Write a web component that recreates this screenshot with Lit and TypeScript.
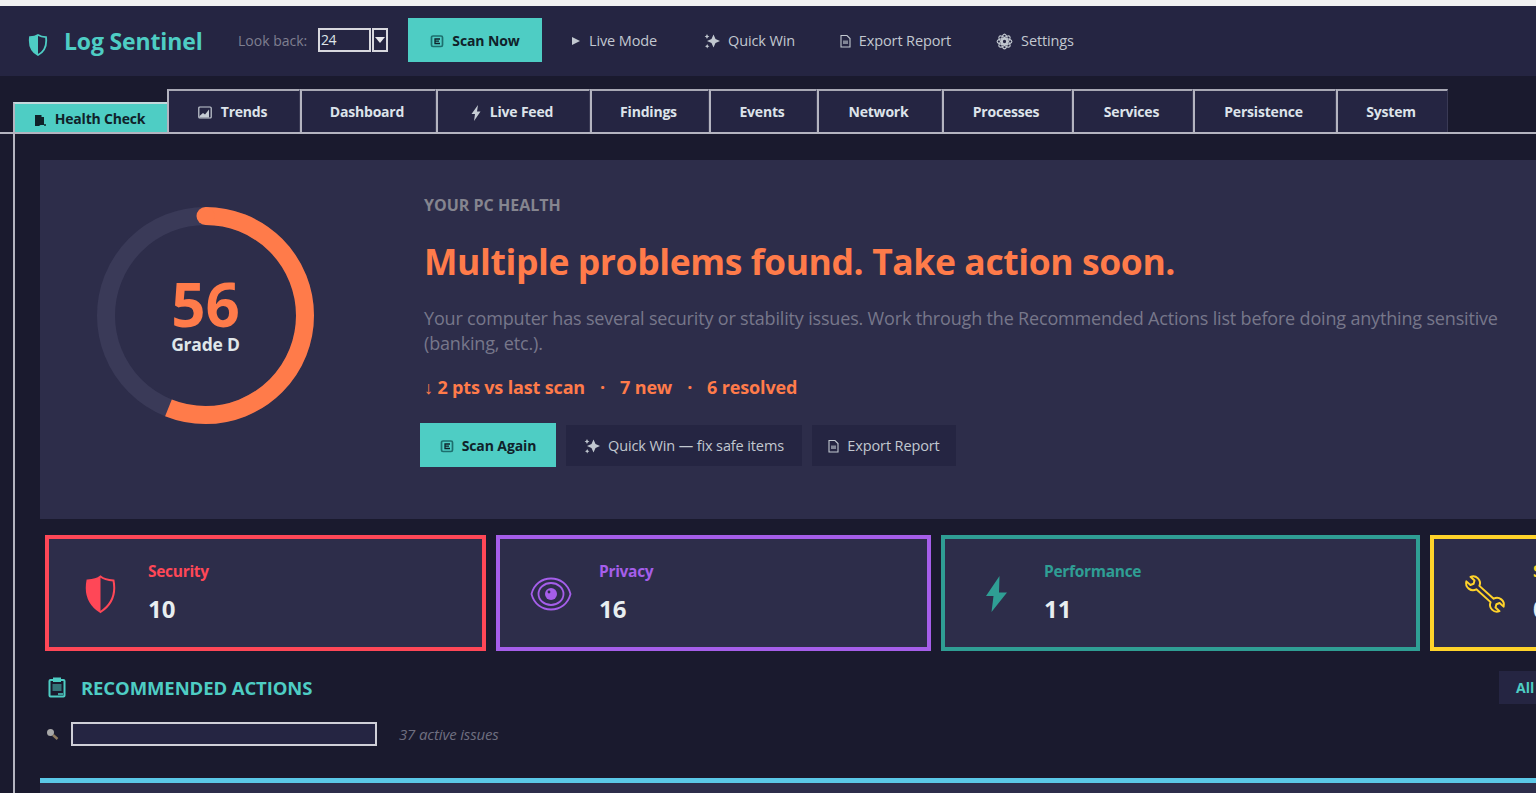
import { LitElement, css, html, svg } from 'lit';
import { customElement } from 'lit/decorators.js';

const icon = (w: number, h: number, vb: string, body: unknown) =>
  html`<svg class="ic" width=${w} height=${h} viewBox=${vb}>${body}</svg>`;

const scanIcon = icon(14, 14, '0 0 14 14', svg`
  <rect x="1.500" y="2" width="11" height="10.500" rx="1.500" fill="none" stroke="currentColor" stroke-width="1.700"/>
  <path d="M10 5H5v4.500h5M5 7.200h4" stroke="#10222a" stroke-width="1.300" fill="none"/>`);
const playIcon = icon(10, 10, '0 0 10 10', svg`<path d="M1 1l8 4-8 4z" fill="currentColor"/>`);
const sparkIcon = icon(16, 16, '0 0 16 16', svg`
  <path d="M9.500 1.500L11.500 6l4.500 2-4.500 2-2 4.500-2-4.500-4.500-2 4.500-2z" fill="currentColor"/>
  <path d="M3 1l.8 1.700 1.600.8-1.600.8L3 6l-.8-1.700L.6 3.500l1.600-.8zM3.200 11l.7 1.500 1.500.7-1.500.7-.7 1.600-.7-1.600-1.500-.7 1.500-.7z" fill="currentColor"/>`);
const docIcon = icon(11, 14, '0 0 11 14', svg`
  <path d="M1 1.500h6l3 3v8.500H1z" fill="none" stroke="currentColor" stroke-width="1.100"/>
  <path d="M3 6.500h5v3.500H3z" fill="currentColor" opacity=".6"/>`);
const gearIcon = icon(17, 17, '0 0 17 17', svg`
  <g fill="none" stroke="currentColor" stroke-width="1.100">
    <circle cx="8.500" cy="8.500" r="2.200"/>
    ${[0, 45, 90, 135].map(
      (a) => svg`<ellipse cx="8.500" cy="8.500" rx="3" ry="7.400" transform="rotate(${a} 8.500 8.500)"/>`
    )}
  </g>`);
const boltIcon = icon(10, 16, '0 0 10 16', svg`<path d="M7 0L.5 9H4l-1 7 6.500-9.500H6z" fill="currentColor"/>`);
const chartIcon = icon(14, 13, '0 0 14 13', svg`
  <rect x=".8" y="1" width="12.400" height="11" rx="1" fill="none" stroke="currentColor" stroke-width="1.200"/>
  <path d="M1.500 10l3.500-3 2 1.500 4-5v8H1.500z" fill="currentColor"/>`);
const clipIcon = icon(12, 13, '0 0 12 13', svg`
  <path d="M1 2h6.500v2H10v8H6.500L5 13H1z" fill="currentColor"/>
  <circle cx="11" cy="12" r="1" fill="currentColor"/>`);

@customElement('app-root')
export class AppRoot extends LitElement {
  static styles = css`
    :host {
      display: block;
      width: 1536px;
      height: 793px;
      overflow: hidden;
      background: #1a1a2e;
      font-family: 'Open Sans', 'Noto Sans', 'Liberation Sans', sans-serif;
      color: #dfe6e9;
    }
    .strip {
      height: 6px;
      background: #f1f1f1;
    }
    .toolbar {
      display: flex;
      align-items: center;
      height: 70px;
      padding-left: 28px;
      background: #252542;
    }
    .toolbar button,
    .select {
      margin-bottom: 2px;
    }
    .logo {
      display: flex;
      align-items: center;
      gap: 16px;
      width: 210px;
      color: #4ecdc4;
      font-size: 23px;
      font-weight: 700;
      letter-spacing: -0.15px;
    }
    .logo svg {
      margin-top: 7px;
    }
    .lookback {
      color: #7f7f90;
      font-size: 14px;
      width: 80px;
      margin-bottom: 2px;
    }
    .select {
      display: flex;
      gap: 1px;
      margin-right: 20px;
    }
    .field {
      width: 48px;
      height: 20px;
      border: 2px solid #d8d8de;
      font-size: 14px;
      line-height: 20px;
      padding-left: 1px;
      color: #dfe6e9;
      letter-spacing: -0.5px;
    }
    .arrow {
      display: flex;
      align-items: center;
      justify-content: center;
      width: 12px;
      height: 20px;
      border: 2px solid #d8d8de;
    }
    .arrow::before {
      content: '';
      border-left: 5px solid transparent;
      border-right: 5px solid transparent;
      border-top: 6px solid #e8e8ec;
    }
    button {
      display: flex;
      align-items: center;
      justify-content: center;
      gap: 8px;
      padding: 0;
      border: 0;
      background: none;
      color: #c2c8d0;
      font: inherit;
      font-size: 14.500px;
      letter-spacing: -0.12px;
      white-space: nowrap;
    }
    .ic {
      flex: none;
      margin-top: 2px;
    }
    .primary {
      background: #4ecdc4;
      color: #10222a;
      font-weight: 700;
      height: 44px;
      font-size: 14px;
      letter-spacing: -0.1px;
    }
    .primary .ic {
      color: #1d6f6e;
    }
    .tool {
      height: 44px;
    }
    .scan-now {
      width: 134px;
    }
    .live {
      width: 132px;
      margin-left: 6px;
    }
    .quick {
      width: 137px;
      margin-left: 1px;
    }
    .export {
      width: 153px;
      margin-left: 1px;
    }
    .settings {
      width: 122px;
      margin-left: 2px;
    }
    .tabs {
      display: grid;
      grid-template-columns: 154px 133px 136px 154px 119px 108px 125px 130px 121px 143px 112px;
      align-items: end;
      height: 43px;
      margin-top: 13px;
      padding-left: 13px;
      border-bottom: 2px solid #b4b4c0;
    }
    .tab {
      display: flex;
      align-items: center;
      justify-content: center;
      gap: 9px;
      box-sizing: border-box;
      height: 43px;
      padding-right: 3px;
      background: #252542;
      border-top: 2px solid #a8a8b4;
      border-left: 2px solid #b4b4c0;
      border-right: 1px solid #3a3a55;
      font-size: 14px;
      font-weight: 700;
      letter-spacing: -0.2px;
      color: #dde3ea;
    }
    .tab .ic {
      color: #c6ccd4;
    }
    .tab.on {
      height: 30px;
      background: #4ecdc4;
      color: #10222a;
      border-top-color: #c4d8dc;
      border-right: 0;
    }
    .tab.on .ic {
      color: #10222a;
    }
    .panel {
      width: 1900px;
      margin-left: 13px;
      padding: 26px 0 0 25px;
      border-left: 2px solid #b4b4c0;
      height: 700px;
    }
    .hero {
      display: flex;
      height: 359px;
      box-sizing: border-box;
      padding: 47px 0 0 57px;
      background: #2d2d4a;
    }
    .ring {
      position: relative;
      flex: none;
      width: 217px;
      height: 217px;
    }
    .ring-text {
      position: absolute;
      inset: 0;
      display: flex;
      flex-direction: column;
      align-items: center;
      justify-content: center;
      padding-bottom: 3px;
    }
    .score {
      color: #ff7b4a;
      font-size: 60px;
      font-weight: 700;
      line-height: 60px;
    }
    .grade {
      font-size: 17.500px;
      font-weight: 700;
      line-height: 20px;
      letter-spacing: -0.2px;
    }
    .summary {
      margin-left: 110px;
      margin-top: -13px;
      width: 1090px;
    }
    .eyebrow {
      color: #85858f;
      font-size: 16px;
      font-weight: 700;
      line-height: 22px;
    }
    h1 {
      margin: 21px 0 0;
      color: #ff7b4a;
      font-size: 35.500px;
      font-weight: 700;
      line-height: 48px;
      letter-spacing: -0.4px;
    }
    .desc {
      margin: 21px 0 0;
      color: #77778a;
      font-size: 18px;
      line-height: 25px;
      letter-spacing: -0.17px;
    }
    .delta {
      display: flex;
      gap: 15px;
      margin-top: 19px;
      color: #ff7b4a;
      font-size: 18px;
      font-weight: 700;
      line-height: 24px;
      letter-spacing: -0.15px;
    }
    .actions {
      display: flex;
      align-items: center;
      gap: 10px;
      margin: 24px 0 0 -4px;
    }
    .scan-again {
      width: 136px;
    }
    .ghost {
      height: 41px;
      background: #252542;
    }
    .quick-fix {
      width: 236px;
    }
    .export-2 {
      width: 144px;
    }
    .cards {
      display: grid;
      grid-template-columns: 441px 435px 479px 400px;
      gap: 10px;
      margin: 16px 0 0 5px;
    }
    .card {
      display: flex;
      align-items: center;
      box-sizing: border-box;
      height: 116px;
      padding: 0 0 2px 21px;
      background: #2d2d4a;
      border: 4px solid var(--accent);
      color: var(--accent);
    }
    .card-icon {
      display: flex;
      justify-content: center;
      flex: none;
      width: 60px;
      margin: 4px 18px 0 0;
    }
    .card-label {
      font-size: 15.500px;
      font-weight: 700;
      line-height: 22px;
      letter-spacing: -0.3px;
    }
    .card-count {
      margin-top: 12px;
      color: #e8eef0;
      font-size: 24px;
      font-weight: 700;
      line-height: 30px;
    }
    .heading {
      display: flex;
      align-items: center;
      height: 33px;
      margin-top: 20px;
    }
    .heading svg {
      margin-left: 8px;
    }
    h2 {
      width: 1418px;
      margin: 0 0 0 15px;
      color: #4ecdc4;
      font-size: 18.500px;
      font-weight: 700;
      letter-spacing: -0.1px;
    }
    .all {
      display: flex;
      align-items: center;
      width: 80px;
      height: 33px;
      padding-left: 17px;
      background: #252542;
      color: #4ecdc4;
      font-size: 14px;
      font-weight: 700;
    }
    .search {
      display: flex;
      align-items: center;
      height: 24px;
      margin-top: 18px;
      margin-left: 5px;
    }
    .search-box {
      box-sizing: border-box;
      width: 306px;
      height: 24px;
      margin-left: 12px;
      background: #252542;
      border: 2px solid #d0d0d8;
    }
    .count {
      margin-left: 22px;
      color: #6f6f80;
      font-size: 15px;
      font-style: italic;
      letter-spacing: -0.15px;
    }
    .next {
      height: 40px;
      margin-top: 32px;
      background: #2d2d4a;
      border-top: 5px solid #5bc8e8;
    }
  `;

  private tabs: [string, unknown][] = [
    ['Trends', chartIcon],
    ['Dashboard', null],
    ['Live Feed', boltIcon],
    ['Findings', null],
    ['Events', null],
    ['Network', null],
    ['Processes', null],
    ['Services', null],
    ['Persistence', null],
    ['System', null],
  ];

  render() {
    return html`
      <div class="strip"></div>
      <header class="toolbar">
        <div class="logo">
          <svg width="20" height="22" viewBox="0 0 20 22">
            <path d="M10 1c2.500 1.500 5 2 8 2.200 1 7.800-1.500 14.300-8 17.800C3.500 17.500 1 11 2 3.200 5 3 7.500 2.500 10 1z" fill="none" stroke="currentColor" stroke-width="1.800"/>
            <path d="M10 1C7.500 2.500 5 3 2 3.200 1 11 3.500 17.500 10 21z" fill="currentColor"/>
          </svg>
          Log Sentinel
        </div>
        <div class="lookback">Look back:</div>
        <div class="select">
          <div class="field">24</div>
          <div class="arrow"></div>
        </div>
        <button class="primary scan-now">${scanIcon}Scan Now</button>
        <button class="tool live">${playIcon}Live Mode</button>
        <button class="tool quick">${sparkIcon}Quick Win</button>
        <button class="tool export">${docIcon}Export Report</button>
        <button class="tool settings">${gearIcon}Settings</button>
      </header>

      <nav class="tabs">
        <div class="tab on">${clipIcon}Health Check</div>
        ${this.tabs.map(([label, ic]) => html`<div class="tab">${ic}${label}</div>`)}
      </nav>

      <main class="panel">
        <section class="hero">
          <div class="ring">
            <svg width="217" height="217" viewBox="0 0 217 217">
              <circle cx="108.500" cy="108.500" r="99.500" fill="none" stroke="#3a3a58" stroke-width="18"/>
              <circle
                cx="108.500"
                cy="108.500"
                r="99.500"
                fill="none"
                stroke="#ff7b4a"
                stroke-width="18"
                stroke-dasharray="350 625.200"
                transform="rotate(-90 108.500 108.500)"
              />
              <circle cx="108.500" cy="9" r="9" fill="#ff7b4a"/>
            </svg>
            <div class="ring-text">
              <div class="score">56</div>
              <div class="grade">Grade D</div>
            </div>
          </div>
          <div class="summary">
            <div class="eyebrow">YOUR PC HEALTH</div>
            <h1>Multiple problems found. Take action soon.</h1>
            <p class="desc">
              Your computer has several security or stability issues. Work through the Recommended Actions list before
              doing anything sensitive (banking, etc.).
            </p>
            <div class="delta">
              <span>↓ 2 pts vs last scan</span><span>·</span><span>7 new</span><span>·</span><span>6 resolved</span>
            </div>
            <div class="actions">
              <button class="primary scan-again">${scanIcon}Scan Again</button>
              <button class="ghost quick-fix">${sparkIcon}Quick Win — fix safe items</button>
              <button class="ghost export-2">${docIcon}Export Report</button>
            </div>
          </div>
        </section>

        <section class="cards">
          <div class="card" style="--accent:#ff4757">
            <div class="card-icon">
              <svg width="33" height="39" viewBox="0 0 33 39">
                <path d="M16.500 1.500c3 2.500 7 3.500 13 4 2.500 13-1.500 24-13 31.500C5 29.500 1 18.500 3.500 5.500c6-.5 10-1.500 13-4z" fill="none" stroke="currentColor" stroke-width="2"/>
                <path d="M16.500 1.500c-3 2.500-7 3.500-13 4C1 18.500 5 29.500 16.500 37z" fill="currentColor"/>
              </svg>
            </div>
            <div><div class="card-label">Security</div><div class="card-count">10</div></div>
          </div>
          <div class="card" style="--accent:#a55eea">
            <div class="card-icon">
              <svg width="42" height="34" viewBox="0 0 42 34">
                <g fill="none" stroke="currentColor" stroke-width="1.800">
                  <path d="M1.500 17C4 7 12 1.500 21 1.500S38 7 40.500 17C38 27 30 32.500 21 32.500S4 27 1.500 17z"/>
                  <ellipse cx="21" cy="17" rx="12.500" ry="11"/>
                </g>
                <circle cx="21" cy="17" r="6" fill="currentColor"/>
                <circle cx="19" cy="15" r="1.400" fill="#2d2d4a"/>
              </svg>
            </div>
            <div><div class="card-label">Privacy</div><div class="card-count">16</div></div>
          </div>
          <div class="card" style="--accent:#2f9e94">
            <div class="card-icon">
              <svg width="21" height="36" viewBox="0 0 21 36">
                <path d="M13.500 0L0 20h7.500L5.500 36 21 16.500h-8z" fill="currentColor"/>
              </svg>
            </div>
            <div><div class="card-label">Performance</div><div class="card-count">11</div></div>
          </div>
          <div class="card" style="--accent:#ffd32a">
            <div class="card-icon">
              <svg width="46" height="46" viewBox="0 0 60 60">
                <path
                  transform="rotate(42 30 30) translate(0 18)"
                  d="M17.500 9H42.500A9 9 0 0 1 59.060 8H52L50 12L52 16H59.060A9 9 0 0 1 42.500 15H17.500A9 9 0 0 1 .94 16H8L10 12L8 8H.94A9 9 0 0 1 17.500 9z"
                  fill="none"
                  stroke="currentColor"
                  stroke-width="2.600"
                  stroke-linejoin="round"
                />
              </svg>
            </div>
            <div><div class="card-label">Stability</div><div class="card-count">0</div></div>
          </div>
        </section>

        <div class="heading">
          <svg width="18" height="21" viewBox="0 0 18 21" fill="none" stroke="#4ecdc4" stroke-width="2">
            <rect x="1.500" y="3" width="15" height="16.500" rx="1"/>
            <path d="M6 1.500h6v2.500H6z" fill="#4ecdc4"/>
            <path d="M4.500 7h9v7h-9z" fill="#4ecdc4" fill-opacity=".5" stroke="none"/>
            <path d="M10 17h5" stroke-width="1.500"/>
          </svg>
          <h2>RECOMMENDED ACTIONS</h2>
          <div class="all">All</div>
        </div>

        <div class="search">
          <svg width="14" height="14" viewBox="0 0 14 14">
            <circle cx="5.500" cy="5.500" r="3.500" fill="#a8a8a8"/>
            <path d="M8 8l4.500 4" stroke="#8d7a5f" stroke-width="2.500"/>
          </svg>
          <div class="search-box"></div>
          <div class="count">37 active issues</div>
        </div>

        <div class="next"></div>
      </main>
    `;
  }
}
